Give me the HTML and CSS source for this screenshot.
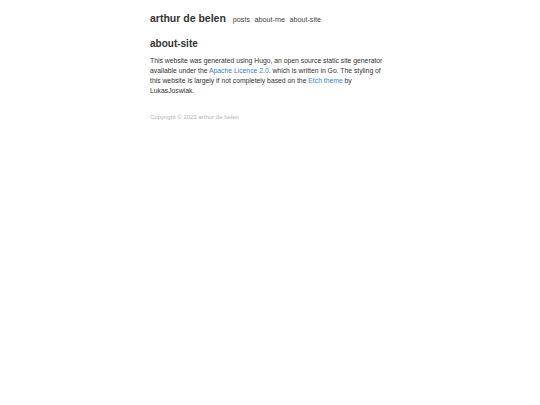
FILE: index.html
```html
<!DOCTYPE html>
<html>
<head>
<meta charset="utf-8">
<link rel="stylesheet" href="styles.css">
</head>
<body>
<div class="wrap">
  <header class="header">
    <a class="site-title" href="#">arthur de belen</a>
    <nav class="nav">
      <a href="#">posts</a>
      <a href="#">about-me</a>
      <a href="#">about-site</a>
    </nav>
  </header>
  <main>
    <h1 class="page-title">about-site</h1>
    <p class="text">This website was generated using Hugo, an open source static site generator available under the <a href="#">Apache Licence 2.0</a>. which is written in Go. The styling of this website is largely if not completely based on the <a href="#">Etch theme</a> by LukasJoswiak.</p>
  </main>
  <footer class="footer">Copyright © 2023 arthur de belen</footer>
</div>
</body>
</html>
```
FILE: styles.css
```css
html, body {
  margin: 0;
  padding: 0;
  background: #fff;
}
body {
  font-family: "Liberation Sans", Arial, sans-serif;
  color: #333;
}
.wrap {
  width: 240px;
  margin: 0 auto;
  padding-top: 12px;
}
.header {
  display: flex;
  align-items: baseline;
  gap: 7px;
}
.site-title {
  font-size: 10.5px;
  font-weight: bold;
  color: #333;
  text-decoration: none;
}
.nav {
  display: flex;
  gap: 4.5px;
}
.nav a {
  font-size: 7.2px;
  color: #444;
  text-decoration: none;
}
.page-title {
  font-size: 10px;
  font-weight: bold;
  margin: 13px 0 0;
  line-height: 14px;
}
.text {
  font-size: 6.8px;
  line-height: 10px;
  margin: 5px 0 0;
}
.text a {
  color: #2f86d6;
  text-decoration: none;
}
.footer {
  font-size: 6px;
  color: #b5b5b5;
  margin-top: 18px;
}
```
